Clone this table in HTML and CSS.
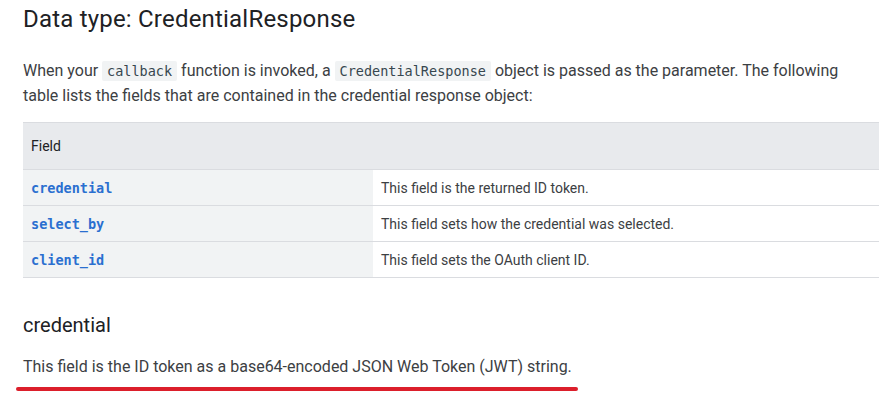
FILE: index.html
```html
<!DOCTYPE html>
<html>
<head>
<meta charset="utf-8">
<link rel="stylesheet" href="styles.css">
</head>
<body>
<main class="page">
  <h2 class="title">Data type: CredentialResponse</h2>
  <p class="text">When your <code class="inline">callback</code> function is invoked, a <code class="inline">CredentialResponse</code> object is passed as the parameter. The following table lists the fields that are contained in the credential response object:</p>
  <table class="fields">
    <thead>
      <tr><th class="col-field">Field</th><th></th></tr>
    </thead>
    <tbody>
      <tr><td class="col-field"><code class="field">credential</code></td><td>This field is the returned ID token.</td></tr>
      <tr><td class="col-field"><code class="field">select_by</code></td><td>This field sets how the credential was selected.</td></tr>
      <tr><td class="col-field"><code class="field">client_id</code></td><td>This field sets the OAuth client ID.</td></tr>
    </tbody>
  </table>
  <h3 class="sub">credential</h3>
  <p class="text note">This field is the ID token as a base64-encoded JSON Web Token (JWT) string.</p>
  <div class="mark"></div>
</main>
</body>
</html>
```
FILE: styles.css
```css
html, body {
  margin: 0;
  padding: 0;
  background: #ffffff;
  overflow: hidden;
}
body {
  font-family: Roboto, "Noto Sans", sans-serif;
  color: #202124;
}
.page {
  padding: 3px 0 0 23px;
}
.title {
  margin: 0;
  font-size: 24px;
  font-weight: 400;
  line-height: 32px;
  letter-spacing: 0.2px;
  color: #202124;
}
.text {
  margin: 23px 0 0 0;
  font-size: 16px;
  line-height: 25px;
  color: #3c4043;
  padding-right: 20px;
}
.inline {
  display: inline-block;
  font-family: "DejaVu Sans Mono", "Liberation Mono", monospace;
  font-size: 13.5px;
  line-height: 20px;
  background: #f1f3f4;
  color: #37474f;
  padding: 0 5px;
  border-radius: 2px;
}
.fields {
  margin-top: 14px;
  width: 100%;
  border-collapse: collapse;
  border-top: 1px solid #dadce0;
  font-size: 14px;
}
.fields th {
  background: #e8eaed;
  height: 46px;
  text-align: left;
  font-weight: 400;
  padding: 0 8px;
  color: #202124;
}
.fields td {
  height: 35px;
  padding: 0 8px;
  border-top: 1px solid #dadce0;
  color: #3c4043;
}
.fields tbody tr:last-child td {
  border-bottom: 1px solid #dadce0;
}
.fields td.col-field {
  background: #f1f3f4;
  width: 334px;
}
.field {
  font-family: "DejaVu Sans Mono", "Liberation Mono", monospace;
  font-size: 13.5px;
  font-weight: 700;
  color: #2a6fd0;
}
.sub {
  margin: 33px 0 0 0;
  font-size: 20px;
  font-weight: 400;
  line-height: 28px;
  color: #202124;
}
.note {
  margin-top: 15px;
}
.mark {
  width: 562px;
  height: 4px;
  margin: 8px 0 0 -7px;
  background: #dc1f2b;
  border-radius: 2px;
}
```
